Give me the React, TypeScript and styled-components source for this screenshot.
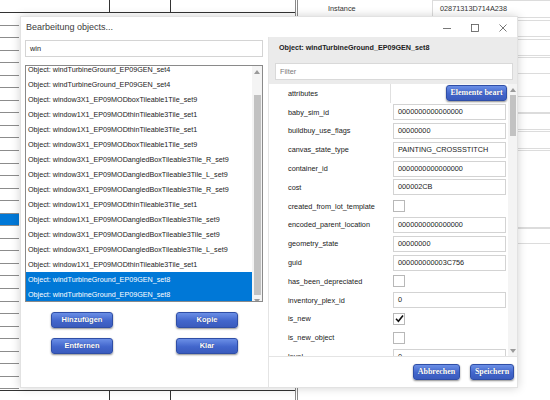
import styled, { createGlobalStyle } from "styled-components";

const GlobalStyle = createGlobalStyle`
  html, body {
    margin: 0;
    padding: 0;
    background: #fff;
  }
  body {
    width: 550px;
    height: 400px;
    overflow: hidden;
    font-family: "Liberation Sans", Arial, sans-serif;
    color: #222;
  }
  #root {
    position: relative;
    width: 550px;
    height: 400px;
  }
`;

const listItems = [
  "Object: windTurbineGround_EP09GEN_set4",
  "Object: windTurbineGround_EP09GEN_set4",
  "Object: window3X1_EP09MODboxTileable1Tile_set9",
  "Object: window1X1_EP09MODthinTileable3Tile_set1",
  "Object: window1X1_EP09MODthinTileable3Tile_set1",
  "Object: window3X1_EP09MODboxTileable1Tile_set9",
  "Object: window3X1_EP09MODangledBoxTileable3Tile_R_set9",
  "Object: window3X1_EP09MODangledBoxTileable3Tile_L_set9",
  "Object: window3X1_EP09MODangledBoxTileable3Tile_R_set9",
  "Object: window1X1_EP09MODthinTileable3Tile_set1",
  "Object: window1X1_EP09MODangledBoxTileable3Tile_set9",
  "Object: window3X1_EP09MODangledBoxTileable3Tile_set9",
  "Object: window3X1_EP09MODangledBoxTileable3Tile_L_set9",
  "Object: window1X1_EP09MODthinTileable3Tile_set1",
  "Object: windTurbineGround_EP09GEN_set8",
  "Object: windTurbineGround_EP09GEN_set8",
];

type Prop =
  | { name: string; kind: "text"; value: string }
  | { name: string; kind: "check"; checked: boolean }
  | { name: string; kind: "button"; value: string };

const props: Prop[] = [
  { name: "attributes", kind: "button", value: "Elemente beart" },
  { name: "baby_sim_id", kind: "text", value: "0000000000000000" },
  { name: "buildbuy_use_flags", kind: "text", value: "00000000" },
  { name: "canvas_state_type", kind: "text", value: "PAINTING_CROSSSTITCH" },
  { name: "container_id", kind: "text", value: "0000000000000000" },
  { name: "cost", kind: "text", value: "000002CB" },
  { name: "created_from_lot_template", kind: "check", checked: false },
  { name: "encoded_parent_location", kind: "text", value: "0000000000000000" },
  { name: "geometry_state", kind: "text", value: "00000000" },
  { name: "guid", kind: "text", value: "000000000003C756" },
  { name: "has_been_depreciated", kind: "check", checked: false },
  { name: "inventory_plex_id", kind: "text", value: "0" },
  { name: "is_new", kind: "check", checked: true },
  { name: "is_new_object", kind: "check", checked: false },
  { name: "level", kind: "text", value: "0" },
];

/* ---------- background application ---------- */

const Page = styled.div`
  display: flex;
  width: 550px;
  height: 400px;
`;

const TableArea = styled.div`
  width: 295px;
  display: grid;
  grid-template-rows: 13px 1fr 10px;
  border-right: 3px double #8a8a8a;
`;

const TableHeader = styled.div<{ $bottom?: boolean }>`
  display: grid;
  grid-template-columns: 110px 61px 1fr;
  border-bottom: ${(p) => (p.$bottom ? "none" : "1px solid #333")};
  border-top: ${(p) => (p.$bottom ? "1px solid #333" : "none")};
`;

const HeaderCell = styled.div`
  border-right: 1px solid #333;
  &:last-child {
    border-right: none;
  }
`;

const TableBody = styled.div`
  display: flex;
  overflow: hidden;
`;

const RowStrip = styled.div`
  width: 19px;
  display: flex;
  flex-direction: column;
`;

const StripRow = styled.div<{ $selected?: boolean }>`
  height: 12.55px;
  flex-shrink: 0;
  box-sizing: border-box;
  border-bottom: 1px solid #8c8c8c;
  background: ${(p) => (p.$selected ? "#0078d7" : "transparent")};
`;

const SidePanel = styled.div`
  flex: 1;
  display: flex;
  flex-direction: column;
`;

const FieldRow = styled.div<{ $h: number; $gap: number }>`
  display: grid;
  grid-template-columns: 134px 1fr;
  height: ${(p) => p.$h}px;
  margin-top: ${(p) => p.$gap}px;
`;

const FieldLabel = styled.div`
  font-size: 7.3px;
  color: #333;
  padding-left: 30px;
  line-height: 18px;
`;

const FieldBox = styled.div`
  border: 1px solid #dcdcdc;
  border-right: none;
  font-size: 7.3px;
  line-height: 16px;
  padding-left: 7px;
  color: #333;
`;

/* ---------- dialog ---------- */

const Dialog = styled.div`
  position: absolute;
  left: 20px;
  top: 16px;
  width: 498px;
  height: 372px;
  box-sizing: border-box;
  background: #fff;
  border: 1px solid #e2e2e2;
  box-shadow: 0 0 9px rgba(0, 0, 0, 0.18);
  display: grid;
  grid-template-columns: 247px 1fr;
  grid-template-rows: 20px 1fr;
`;

const TitleText = styled.div`
  padding-left: 5px;
  font-size: 9px;
  line-height: 21px;
  color: #3c3c3c;
`;

const TitleControls = styled.div`
  display: flex;
  justify-content: flex-end;
`;

const ControlButton = styled.div`
  width: 28px;
  height: 22px;
  display: flex;
  align-items: center;
  justify-content: center;
`;

const LeftColumn = styled.div`
  padding: 3px 0 0 4px;
  display: flex;
  flex-direction: column;
`;

const SearchBox = styled.div`
  width: 238px;
  height: 17px;
  box-sizing: border-box;
  border: 1px solid #d4d4d4;
  font-size: 7.3px;
  line-height: 15px;
  padding-left: 4px;
  color: #222;
`;

const ListBox = styled.div`
  margin-top: 8px;
  width: 238px;
  height: 237px;
  box-sizing: border-box;
  border: 1px solid #8a8a8a;
  display: flex;
  overflow: hidden;
`;

const ListItems = styled.div`
  flex: 1;
  overflow: hidden;
`;

const ListScroll = styled.div`
  margin-top: -4px;
`;

const ListItem = styled.div<{ $selected?: boolean }>`
  height: 15px;
  line-height: 15px;
  padding-left: 2px;
  font-size: 7.2px;
  white-space: nowrap;
  background: ${(p) => (p.$selected ? "#0078d7" : "transparent")};
  color: ${(p) => (p.$selected ? "#fff" : "#222")};
`;

const ScrollBar = styled.div<{ $w: number }>`
  width: ${(p) => p.$w}px;
  flex-shrink: 0;
  display: flex;
  flex-direction: column;
  background: #f4f4f4;
`;

const ScrollArrow = styled.div`
  height: 11px;
  display: flex;
  align-items: center;
  justify-content: center;
  flex-shrink: 0;
`;

const ScrollTrack = styled.div`
  flex: 1;
  display: flex;
  flex-direction: column;
`;

const ScrollThumb = styled.div<{ $top: number; $height: number }>`
  margin: ${(p) => p.$top}px 1px 0 2px;
  height: ${(p) => p.$height}px;
  background: #c2c2c2;
`;

const ButtonGrid = styled.div`
  margin: 10px 0 0 26px;
  display: grid;
  grid-template-columns: 62px 62px;
  grid-auto-rows: 16px;
  column-gap: 63px;
  row-gap: 10px;
`;

const BlueButton = styled.div<{ $serif?: boolean; $w?: number }>`
  width: ${(p) => (p.$w ? `${p.$w}px` : "auto")};
  height: 16px;
  box-sizing: border-box;
  border: 1px solid #2f4ea6;
  border-radius: 3px;
  background: linear-gradient(#6b8fe6, #4266cc 55%, #3a5bbd);
  box-shadow: 0 1px 2px rgba(0, 0, 0, 0.45);
  color: #fff;
  font-family: ${(p) =>
    p.$serif ? `"Liberation Serif", "Times New Roman", serif` : `"Liberation Sans", Arial, sans-serif`};
  font-weight: bold;
  font-size: ${(p) => (p.$serif ? "8px" : "7.5px")};
  line-height: 14px;
  text-align: center;
  white-space: nowrap;
  overflow: hidden;
  text-shadow: 0 0 1px rgba(0, 0, 0, 0.4);
`;

const RightPane = styled.div`
  border-left: 1px solid #e4e4e4;
  display: flex;
  flex-direction: column;
  min-height: 0;
`;

const PaneHeader = styled.div`
  background: #ebebeb;
  padding: 0 4px 4px 6px;
`;

const PaneTitle = styled.div`
  padding-left: 4px;
  font-size: 7.2px;
  font-weight: bold;
  line-height: 21px;
  color: #222;
`;

const FilterBox = styled.div`
  margin-top: 5px;
  height: 17px;
  box-sizing: border-box;
  border: 1px solid #d9d9d9;
  background: #fff;
  font-size: 7.3px;
  line-height: 15px;
  padding-left: 4px;
  color: #7a7a7a;
`;

const PropGrid = styled.div`
  flex: 1;
  min-height: 0;
  display: flex;
`;

const PropRows = styled.div`
  flex: 1;
  overflow: hidden;
`;

const PropRow = styled.div`
  height: 18.8px;
  display: grid;
  grid-template-columns: 121px 1fr;
  align-items: center;
`;

const PropLabel = styled.div`
  padding-left: 19px;
  font-size: 7.3px;
  color: #222;
  white-space: nowrap;
`;

const PropValue = styled.div<{ $split?: boolean }>`
  height: 100%;
  display: flex;
  align-items: center;
  justify-content: ${(p) => (p.$split ? "flex-end" : "flex-start")};
  padding: 0 1px 0 3px;
  border-left: ${(p) => (p.$split ? "1px solid #e0e0e0" : "none")};
`;

const ValueInput = styled.div`
  width: 113px;
  height: 16px;
  box-sizing: border-box;
  border: 1px solid #d3d3d3;
  font-size: 7.3px;
  line-height: 14px;
  padding-left: 4px;
  color: #222;
  white-space: nowrap;
  overflow: hidden;
`;

const CheckBox = styled.div`
  width: 12px;
  height: 12px;
  box-sizing: border-box;
  border: 1px solid #b8b8b8;
  background: #fff;
  display: flex;
  align-items: center;
  justify-content: center;
`;

const PaneFooter = styled.div`
  height: 30px;
  flex-shrink: 0;
  border-top: 1px solid #e4e4e4;
  display: flex;
  align-items: center;
  justify-content: flex-end;
  gap: 10px;
  padding-right: 3px;
`;

const Arrow = ({ up }: { up?: boolean }) => (
  <svg width="6" height="4" viewBox="0 0 6 4">
    <path d={up ? "M0 4 L3 0 L6 4 Z" : "M0 0 L3 4 L6 0 Z"} fill="#9a9a9a" />
  </svg>
);

const Scroll = ({ w, top, height }: { w: number; top: number; height: number }) => (
  <ScrollBar $w={w}>
    <ScrollArrow>
      <Arrow up />
    </ScrollArrow>
    <ScrollTrack>
      <ScrollThumb $top={top} $height={height} />
    </ScrollTrack>
    <ScrollArrow>
      <Arrow />
    </ScrollArrow>
  </ScrollBar>
);

const fields = [
  { label: "Instance", value: "02871313D714A238", h: 18, gap: 0 },
  { label: "", value: "", h: 17, gap: 2 },
  { label: "", value: "", h: 17, gap: 2 },
  { label: "", value: "", h: 17, gap: 1 },
  { label: "", value: "", h: 17, gap: 22 },
  { label: "", value: "", h: 17, gap: 0 },
  { label: "", value: "", h: 18, gap: 1 },
  { label: "", value: "", h: 78, gap: 1 },
  { label: "", value: "", h: 16, gap: 0 },
];

export default function App() {
  return (
    <>
      <GlobalStyle />
      <Page>
        <TableArea>
          <TableHeader>
            <HeaderCell />
            <HeaderCell />
            <HeaderCell />
          </TableHeader>
          <TableBody>
            <RowStrip>
              {Array.from({ length: 31 }, (_, i) => (
                <StripRow key={i} $selected={i === 16} />
              ))}
            </RowStrip>
          </TableBody>
          <TableHeader $bottom>
            <HeaderCell />
            <HeaderCell />
            <HeaderCell />
          </TableHeader>
        </TableArea>
        <SidePanel>
          {fields.map((f, i) => (
            <FieldRow key={i} $h={f.h} $gap={f.gap}>
              <FieldLabel>{f.label}</FieldLabel>
              <FieldBox>{f.value}</FieldBox>
            </FieldRow>
          ))}
        </SidePanel>
      </Page>

      <Dialog>
        <TitleText>Bearbeitung objects...</TitleText>
        <TitleControls>
          <ControlButton>
            <svg width="10" height="10" viewBox="0 0 10 10">
              <path d="M1 5.5 H9" stroke="#555" strokeWidth="0.8" />
            </svg>
          </ControlButton>
          <ControlButton>
            <svg width="10" height="10" viewBox="0 0 10 10">
              <rect x="1.5" y="1.5" width="7" height="7" fill="none" stroke="#555" strokeWidth="0.8" />
            </svg>
          </ControlButton>
          <ControlButton>
            <svg width="10" height="10" viewBox="0 0 10 10">
              <path d="M1.5 1.5 L8.5 8.5 M8.5 1.5 L1.5 8.5" stroke="#555" strokeWidth="0.8" />
            </svg>
          </ControlButton>
        </TitleControls>

        <LeftColumn>
          <SearchBox>win</SearchBox>
          <ListBox>
            <ListItems>
              <ListScroll>
                {listItems.map((t, i) => (
                  <ListItem key={i} $selected={i >= 14}>
                    {t}
                  </ListItem>
                ))}
              </ListScroll>
            </ListItems>
            <Scroll w={10} top={18} height={200} />
          </ListBox>
          <ButtonGrid>
            <BlueButton>Hinzufügen</BlueButton>
            <BlueButton>Kopie</BlueButton>
            <BlueButton>Entfernen</BlueButton>
            <BlueButton>Klar</BlueButton>
          </ButtonGrid>
        </LeftColumn>

        <RightPane>
          <PaneHeader>
            <PaneTitle>Object: windTurbineGround_EP09GEN_set8</PaneTitle>
            <FilterBox>Filter</FilterBox>
          </PaneHeader>
          <PropGrid>
            <PropRows>
              {props.map((p) => (
                <PropRow key={p.name}>
                  <PropLabel>{p.name}</PropLabel>
                  {p.kind === "button" ? (
                    <PropValue $split>
                      <BlueButton $serif $w={61}>
                        {p.value}
                      </BlueButton>
                    </PropValue>
                  ) : p.kind === "check" ? (
                    <PropValue>
                      <CheckBox>
                        {p.checked && (
                          <svg width="9" height="9" viewBox="0 0 9 9">
                            <path d="M1 4.8 L3.4 7.2 L8 1.6" fill="none" stroke="#111" strokeWidth="1.6" />
                          </svg>
                        )}
                      </CheckBox>
                    </PropValue>
                  ) : (
                    <PropValue>
                      <ValueInput>{p.value}</ValueInput>
                    </PropValue>
                  )}
                </PropRow>
              ))}
            </PropRows>
            <Scroll w={9} top={0} height={41} />
          </PropGrid>
          <PaneFooter>
            <BlueButton $serif $w={47}>
              Abbrechen
            </BlueButton>
            <BlueButton $serif $w={44}>
              Speichern
            </BlueButton>
          </PaneFooter>
        </RightPane>
      </Dialog>
    </>
  );
}
